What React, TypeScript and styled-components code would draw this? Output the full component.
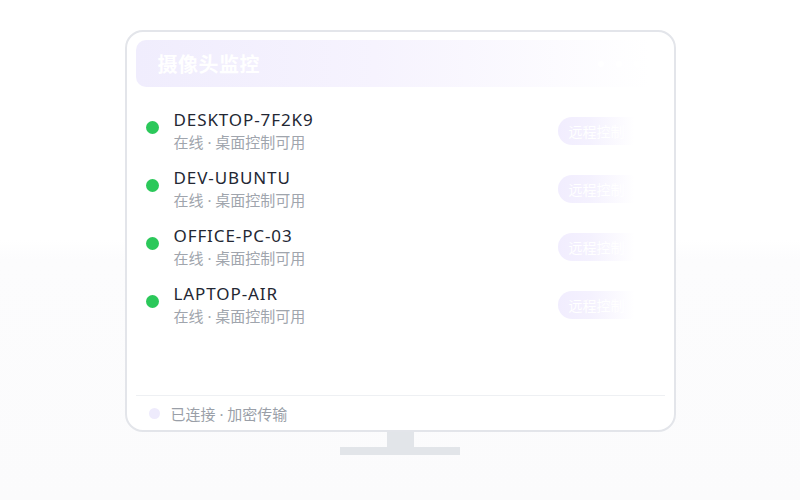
import React from "react";
import styled, { createGlobalStyle } from "styled-components";

const Global = createGlobalStyle`
  html, body { margin: 0; padding: 0; }
  body {
    width: 800px;
    height: 500px;
    overflow: hidden;
    font-family: "Noto Sans", "Noto Sans CJK SC", sans-serif;
    background: linear-gradient(180deg, #ffffff 0%, #ffffff 48%, #fcfcfd 52%, #fbfbfc 100%);
  }
`;

const Page = styled.div`
  width: 800px;
  height: 500px;
  display: flex;
  flex-direction: column;
  align-items: center;
  padding-top: 30px;
  box-sizing: border-box;
`;

const Monitor = styled.div`
  width: 551px;
  height: 402px;
  box-sizing: border-box;
  border: 2px solid #e3e5ea;
  border-radius: 18px;
  background: #ffffff;
  padding: 8px 9px 0;
  display: flex;
  flex-direction: column;
`;

const Header = styled.div`
  height: 47px;
  flex: none;
  border-radius: 10px;
  background: linear-gradient(90deg, #f0edfd 0%, #f6f3fe 45%, #ffffff 97%);
  display: flex;
  align-items: center;
  justify-content: space-between;
  padding: 0 22px;
`;

const Title = styled.div`
  color: #ffffff;
  font-size: 20px;
  font-weight: 700;
  font-family: "Noto Sans CJK SC", sans-serif;
  letter-spacing: 0.5px;
`;

const Dots = styled.div`
  display: flex;
  gap: 12px;
  margin-right: 3px;
`;

const Dot = styled.span`
  width: 6px;
  height: 6px;
  border-radius: 50%;
  background: #ffffff;
`;

const List = styled.div`
  flex: 1;
  padding-top: 11px;
  display: flex;
  flex-direction: column;
`;

const Row = styled.div`
  height: 58px;
  display: grid;
  grid-template-columns: 12px 1fr auto;
  column-gap: 16px;
  align-items: center;
  padding: 0 0 0 10px;
`;

const Status = styled.span<{ $color: string }>`
  width: 13px;
  height: 13px;
  border-radius: 50%;
  background: ${(p) => p.$color};
`;

const Info = styled.div`
  display: flex;
  flex-direction: column;
  padding-top: 9px;
`;

const Name = styled.div`
  font-family: "Noto Sans", sans-serif;
  font-size: 17px;
  line-height: 22px;
  letter-spacing: 0.9px;
  color: #232733;
`;

const Sub = styled.div`
  font-family: "Noto Sans", "Noto Sans CJK SC", sans-serif;
  font-size: 15px;
  line-height: 23px;
  color: #a0a5ad;
`;

const ControlButton = styled.div`
  width: 90px;
  height: 28px;
  border-radius: 14px;
  margin-right: 17px;
  margin-top: 8px;
  background: linear-gradient(90deg, #f1edfe 0%, #f4f1fe 35%, #ffffff 85%);
  color: #ffffff;
  font-family: "Noto Sans CJK SC", sans-serif;
  font-size: 14px;
  display: flex;
  align-items: center;
  padding-left: 11px;
  box-sizing: border-box;
`;

const Footer = styled.div`
  height: 34px;
  flex: none;
  border-top: 1px solid #eef0f3;
  display: flex;
  align-items: center;
  gap: 11px;
  padding-left: 13px;
`;

const FooterDot = styled.span`
  width: 11px;
  height: 11px;
  border-radius: 50%;
  background: #eeebfc;
`;

const FooterText = styled.span`
  font-family: "Noto Sans", "Noto Sans CJK SC", sans-serif;
  font-size: 15px;
  color: #9a9fa8;
`;

const Neck = styled.div`
  width: 27px;
  height: 15px;
  background: #e2e5e9;
`;

const Base = styled.div`
  width: 120px;
  height: 8px;
  background: #e2e5e9;
`;

const devices = ["DESKTOP-7F2K9", "DEV-UBUNTU", "OFFICE-PC-03", "LAPTOP-AIR"];

export default function App() {
  return (
    <>
      <Global />
      <Page>
        <Monitor>
          <Header>
            <Title>摄像头监控</Title>
            <Dots>
              <Dot />
              <Dot />
              <Dot />
            </Dots>
          </Header>
          <List>
            {devices.map((d) => (
              <Row key={d}>
                <Status $color="#2bc85a" />
                <Info>
                  <Name>{d}</Name>
                  <Sub>在线 · 桌面控制可用</Sub>
                </Info>
                <ControlButton>远程控制</ControlButton>
              </Row>
            ))}
          </List>
          <Footer>
            <FooterDot />
            <FooterText>已连接 · 加密传输</FooterText>
          </Footer>
        </Monitor>
        <Neck />
        <Base />
      </Page>
    </>
  );
}
